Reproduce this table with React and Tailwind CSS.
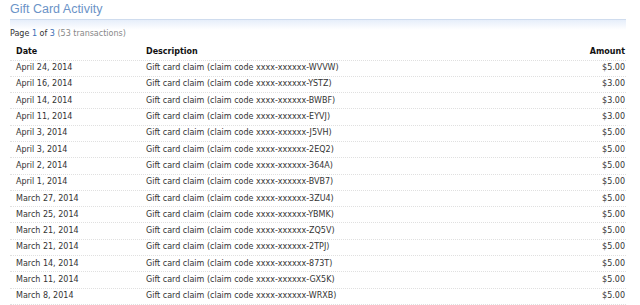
const rows = [
  ['April 24, 2014', 'WVVW', '$5.00'],
  ['April 16, 2014', 'YSTZ', '$3.00'],
  ['April 14, 2014', 'BWBF', '$3.00'],
  ['April 11, 2014', 'EYVJ', '$3.00'],
  ['April 3, 2014', 'J5VH', '$5.00'],
  ['April 3, 2014', '2EQ2', '$5.00'],
  ['April 2, 2014', '364A', '$5.00'],
  ['April 1, 2014', 'BVB7', '$5.00'],
  ['March 27, 2014', '3ZU4', '$5.00'],
  ['March 25, 2014', 'YBMK', '$5.00'],
  ['March 21, 2014', 'ZQ5V', '$5.00'],
  ['March 21, 2014', '2TPJ', '$5.00'],
  ['March 14, 2014', '873T', '$5.00'],
  ['March 11, 2014', 'GX5K', '$5.00'],
  ['March 8, 2014', 'WRXB', '$5.00'],
]

export default function App() {
  return (
    <div className="w-[640px] h-[305px] overflow-hidden bg-white px-[10px] pr-[14px] font-['DejaVu_Sans',sans-serif] text-[#333]">
      <h1 className="font-['Liberation_Sans',Arial,sans-serif] text-[12.5px] leading-[16px] text-[#6b93c7] pt-[1px]">
        Gift Card Activity
      </h1>

      {/* header band */}
      <div className="mt-[2px] h-[11px] border-t border-[#cfdcee] bg-gradient-to-b from-[#e6eefa] to-white" />

      <p className="text-[8px] leading-[10px] mt-[-1px]">
        Page <span className="text-[#3b6fb5]">1</span> of <span className="text-[#3b6fb5]">3</span>{' '}
        <span className="text-[#888]">(53 transactions)</span>
      </p>

      <div className="mt-[5px]">
        <div className="flex items-center h-[16.5px] border-b border-dotted border-[#e0e0e0] text-[8px] font-bold text-[#111]">
          <div className="w-[136px] pl-[6px]">Date</div>
          <div className="flex-1">Description</div>
          <div className="pr-[1px]">Amount</div>
        </div>
        {rows.map(([date, code, amt], i) => (
          <div
            key={i}
            className="flex items-center h-[16.3px] border-b border-dotted border-[#e0e0e0] text-[8px]"
          >
            <div className="w-[136px] pl-[6px]">{date}</div>
            <div className="flex-1">Gift card claim (claim code xxxx-xxxxxx-{code})</div>
            <div className="pr-[1px]">{amt}</div>
          </div>
        ))}
      </div>
    </div>
  )
}
